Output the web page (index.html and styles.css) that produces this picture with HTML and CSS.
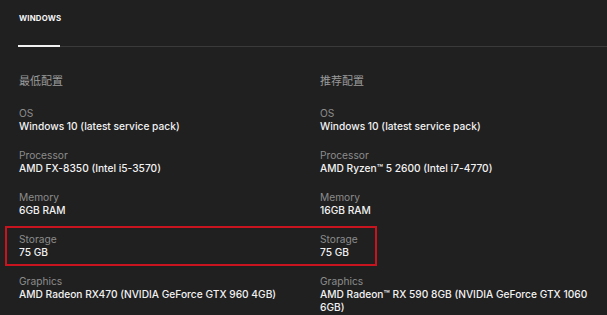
FILE: index.html
```html
<!DOCTYPE html>
<html lang="zh">
<head>
<meta charset="utf-8">
<link rel="stylesheet" href="styles.css">
</head>
<body>
<div class="page">
  <div class="tabs">
    <span class="tab">WINDOWS</span>
  </div>
  <div class="cols">
    <section class="col">
      <h3 class="col-title">最低配置</h3>
      <div class="spec"><div class="label">OS</div><div class="value">Windows 10 (latest service pack)</div></div>
      <div class="spec"><div class="label">Processor</div><div class="value">AMD FX-8350 (Intel i5-3570)</div></div>
      <div class="spec"><div class="label">Memory</div><div class="value">6GB RAM</div></div>
      <div class="spec"><div class="label">Storage</div><div class="value">75 GB</div></div>
      <div class="spec"><div class="label">Graphics</div><div class="value">AMD Radeon RX470 (NVIDIA GeForce GTX 960 4GB)</div></div>
    </section>
    <section class="col">
      <h3 class="col-title">推荐配置</h3>
      <div class="spec"><div class="label">OS</div><div class="value">Windows 10 (latest service pack)</div></div>
      <div class="spec"><div class="label">Processor</div><div class="value">AMD Ryzen™ 5 2600 (Intel i7-4770)</div></div>
      <div class="spec"><div class="label">Memory</div><div class="value">16GB RAM</div></div>
      <div class="spec"><div class="label">Storage</div><div class="value">75 GB</div></div>
      <div class="spec"><div class="label">Graphics</div><div class="value">AMD Radeon™ RX 590 8GB (NVIDIA GeForce GTX 1060 6GB)</div></div>
    </section>
  </div>
  <div class="highlight"></div>
</div>
</body>
</html>
```
FILE: styles.css
```css
* { box-sizing: border-box; }
html, body { margin: 0; padding: 0; }
body {
  background: #202020;
  font-family: "Inter", "Noto Sans CJK SC", sans-serif;
  overflow: hidden;
}
.page {
  position: relative;
  width: 607px;
  height: 315px;
  padding-top: 13px;
  overflow: hidden;
}
.tabs {
  margin-left: 18px;
  border-bottom: 1px solid #3a3a3a;
  height: 34px;
  display: flex;
}
.tab {
  display: block;
  padding-left: 1px;
  width: 42px;
  font-size: 7.8px;
  font-weight: 700;
  letter-spacing: 0.2px;
  color: #f5f5f5;
  line-height: 10px;
  border-bottom: 2px solid #f0f0f0;
  margin-bottom: -1px;
}
.cols {
  display: grid;
  grid-template-columns: 301px 1fr;
  padding-left: 19px;
  padding-top: 25px;
}
.col-title {
  margin: 0 0 19px;
  font-size: 11px;
  font-weight: 400;
  line-height: 16px;
  color: #9a9a9a;
  font-family: "Noto Sans CJK SC", sans-serif;
}
.spec {
  margin-bottom: 16px;
}
.label {
  font-size: 10.2px;
  line-height: 13px;
  color: #8c8c8c;
}
.value {
  font-size: 10.2px;
  line-height: 13px;
  color: #f2f2f2;
  font-weight: 500;
}
.highlight {
  position: absolute;
  left: 5px;
  top: 226px;
  width: 372px;
  height: 40px;
  border: 2.5px solid #c8141e;
}
```
